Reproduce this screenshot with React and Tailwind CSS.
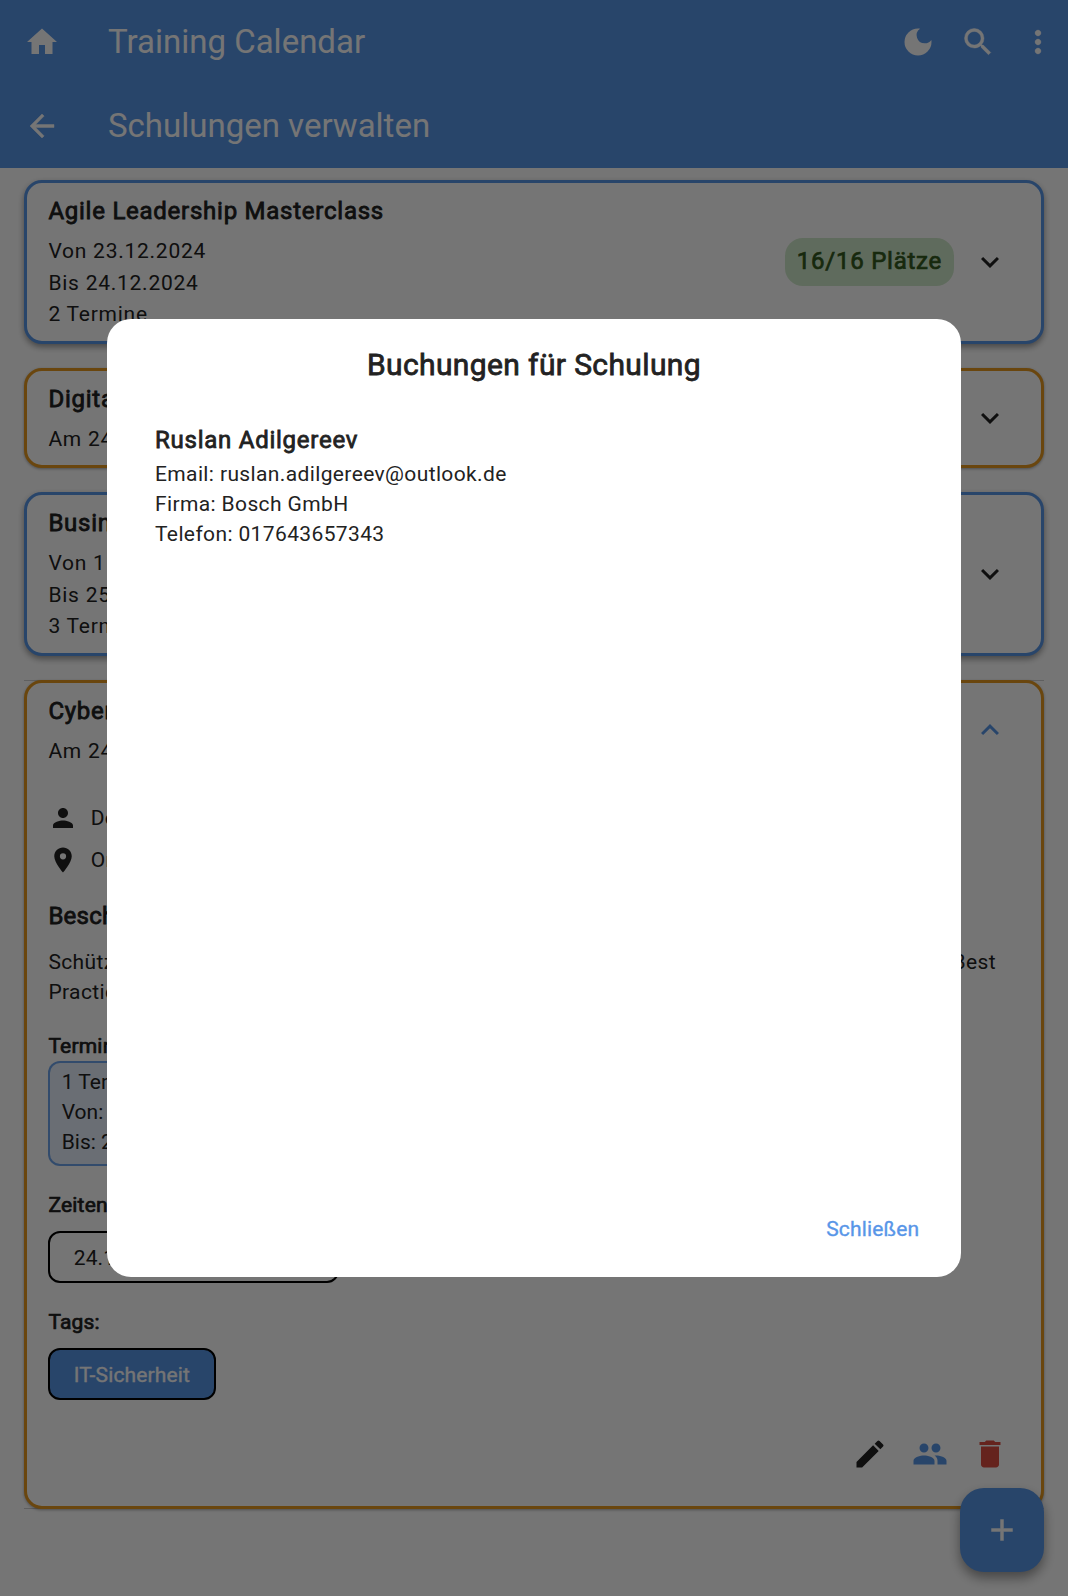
import React from "react";
import {
  MdHome,
  MdArrowBack,
  MdDarkMode,
  MdSearch,
  MdMoreVert,
  MdExpandMore,
  MdExpandLess,
  MdPerson,
  MdPlace,
  MdEdit,
  MdPeople,
  MdDelete,
  MdAdd,
} from "react-icons/md";

const BORDER = {
  blue: "border-[#5896e8] shadow-[0_3px_6px_rgba(0,0,0,0.4)]",
  orange: "border-[#e89a1f] shadow-[0_1px_3px_rgba(0,0,0,0.35)]",
};

function Card({ tone, title, lines, badge, open, children }) {
  return (
    <section className={`rounded-[18px] border-3 bg-white ${BORDER[tone]}`}>
      <div className="flex items-center justify-between pt-[10.25px] pr-[33px] pb-[9.9px] pl-[21.4px]">
        <div>
          <h2 className="mb-[6.9px] text-2xl leading-9 tracking-[0.75px] [-webkit-text-stroke:0.8px]">{title}</h2>
          {lines.map((line) => (
            <p key={line} className="text-[21px] leading-[31.5px] tracking-[0.75px]">
              {line}
            </p>
          ))}
        </div>
        <div className="flex items-center gap-[18px]">
          {badge && (
            <span className="rounded-[18px] bg-[#cfe9ca] px-3 pt-[5px] pb-[7px] text-2xl leading-9 tracking-[0.75px] text-[#33591e] [-webkit-text-stroke:0.7px]">
              {badge}
            </span>
          )}
          {open ? <MdExpandLess className="size-9 text-[#5896e8]" /> : <MdExpandMore className="size-9" />}
        </div>
      </div>
      {children}
    </section>
  );
}

function Label({ children, className }) {
  return (
    <h3 className={`pl-[0.4px] text-[21px] leading-[30px] tracking-[0.2px] [-webkit-text-stroke:0.7px] ${className}`}>
      {children}
    </h3>
  );
}

function Details() {
  return (
    <div className="px-[21px] pt-[26px] text-[21px] leading-[30px] tracking-[0.375px]">
      <div className="flex items-center gap-[12.7px]">
        <MdPerson className="size-[30px]" />
        <span>Dozent: Max Weber</span>
      </div>
      <div className="mt-3 flex items-center gap-[12.7px]">
        <MdPlace className="size-[30px]" />
        <span>Online</span>
      </div>
      <h3 className="mt-[22.9px] pl-[0.4px] text-2xl leading-9 tracking-[0.225px] [-webkit-text-stroke:0.8px]">
        Beschreibung:
      </h3>
      <div className="mt-[13.1px] mr-6 flex justify-between pl-[0.4px]">
        <span>Schützen Sie Ihr Unternehmen vor digitalen Bedrohungen</span>
        <span>und Best</span>
      </div>
      <p className="pl-[0.4px]">Practices der IT-Sicherheit.</p>
      <Label className="mt-6">Termine:</Label>
      <div className="w-[300px] rounded-xl border-2 border-[#5896e8]/85 bg-[#e6effc] px-[11.7px] pt-[4.2px] pb-[6.6px] tracking-[0px]">
        <p>1 Termin</p>
        <p>Von: 24.12.2024</p>
        <p>Bis: 24.12.2024</p>
      </div>
      <Label className="mt-6">Zeiten:</Label>
      <div className="mt-[11.3px] w-[291px] rounded-xl border-2 border-black px-[23.7px] pt-[9.5px] pb-2 tracking-[0.15px]">
        24.12.2024 09:00 - 17:00
      </div>
      <Label className="mt-6">Tags:</Label>
      <div className="mt-[11.5px] flex">
        <span className="rounded-xl border-2 border-black bg-[#5896e8] px-[23.7px] pt-[9.5px] pb-2 tracking-[0.15px] text-white [-webkit-text-stroke:0.35px]">
          IT-Sicherheit
        </span>
      </div>
      <div className="mt-9 mr-3 flex justify-end gap-6 pb-[34.5px]">
        <MdEdit className="size-9" />
        <MdPeople className="size-9 text-[#5896e8]" />
        <MdDelete className="size-9 text-[#dc4e41]" />
      </div>
    </div>
  );
}

export default function App() {
  return (
    <div className="relative h-[1596px] w-[1068px] overflow-hidden bg-white font-['Roboto',sans-serif] text-[#222222]">
      <header className="bg-[#5896e8] text-[33px] leading-[42px] text-white">
        <div className="flex h-[84px] items-center px-6">
          <MdHome className="size-9" />
          <h1 className="ml-12 grow">Training Calendar</h1>
          <div className="-mr-3 flex gap-6">
            <MdDarkMode className="size-9" />
            <MdSearch className="size-9 [&>path:last-child]:[stroke-width:0.3]" />
            <MdMoreVert className="size-9 [&>path:last-child]:[stroke-width:0.2]" />
          </div>
        </div>
        <div className="flex h-[84px] items-center px-6">
          <MdArrowBack className="size-9 [&>path:last-child]:[stroke-width:0.3]" />
          <h1 className="ml-12">Schulungen verwalten</h1>
        </div>
      </header>

      <main className="flex flex-col gap-6 px-6 pt-3">
        <Card
          tone="blue"
          title="Agile Leadership Masterclass"
          lines={["Von 23.12.2024", "Bis 24.12.2024", "2 Termine"]}
          badge="16/16 Plätze"
        />
        <Card tone="orange" title="Digitale Transformation" lines={["Am 24.12.2024"]} />
        <Card tone="blue" title="Business Coaching" lines={["Von 11.12.2024", "Bis 25.12.2024", "3 Termine"]} />
        <div className="border-y border-[#d0d0d0]">
          <div className="-my-px">
            <Card tone="orange" title="Cybersecurity Grundlagen" lines={["Am 24.12.2024"]} open>
              <Details />
            </Card>
          </div>
        </div>
      </main>

      <button className="absolute right-6 bottom-6 flex size-[84px] items-center justify-center rounded-3xl bg-[#5896e8] text-white shadow-[0_6px_12px_rgba(0,0,0,0.4)]">
        <MdAdd className="size-9 [&>path:last-child]:[stroke-width:0.3]" />
      </button>

      <div className="absolute inset-0 flex items-center justify-center bg-black/54">
        <div className="flex h-[957.6px] w-[854.4px] flex-col rounded-3xl bg-white px-12 pt-[25px] pb-6">
          <h2 className="text-center text-[30px] leading-[42px] tracking-[0.375px] [-webkit-text-stroke:0.8px]">
            Buchungen für Schulung
          </h2>
          <div className="mt-9 grow pl-[0.2px] text-[21px] leading-[30px] tracking-[0.375px]">
            <h3 className="mb-px text-2xl leading-9 tracking-[0.75px] [-webkit-text-stroke:0.8px]">Ruslan Adilgereev</h3>
            <p>Email: ruslan.adilgereev@outlook.de</p>
            <p>Firma: Bosch GmbH</p>
            <p>Telefon: 017643657343</p>
          </div>
          <button className="-mr-[6px] self-end py-[9px] text-[21px] leading-[30px] tracking-[0.15px] text-[#5896e8] [-webkit-text-stroke:0.35px]">
            Schließen
          </button>
        </div>
      </div>
    </div>
  );
}
